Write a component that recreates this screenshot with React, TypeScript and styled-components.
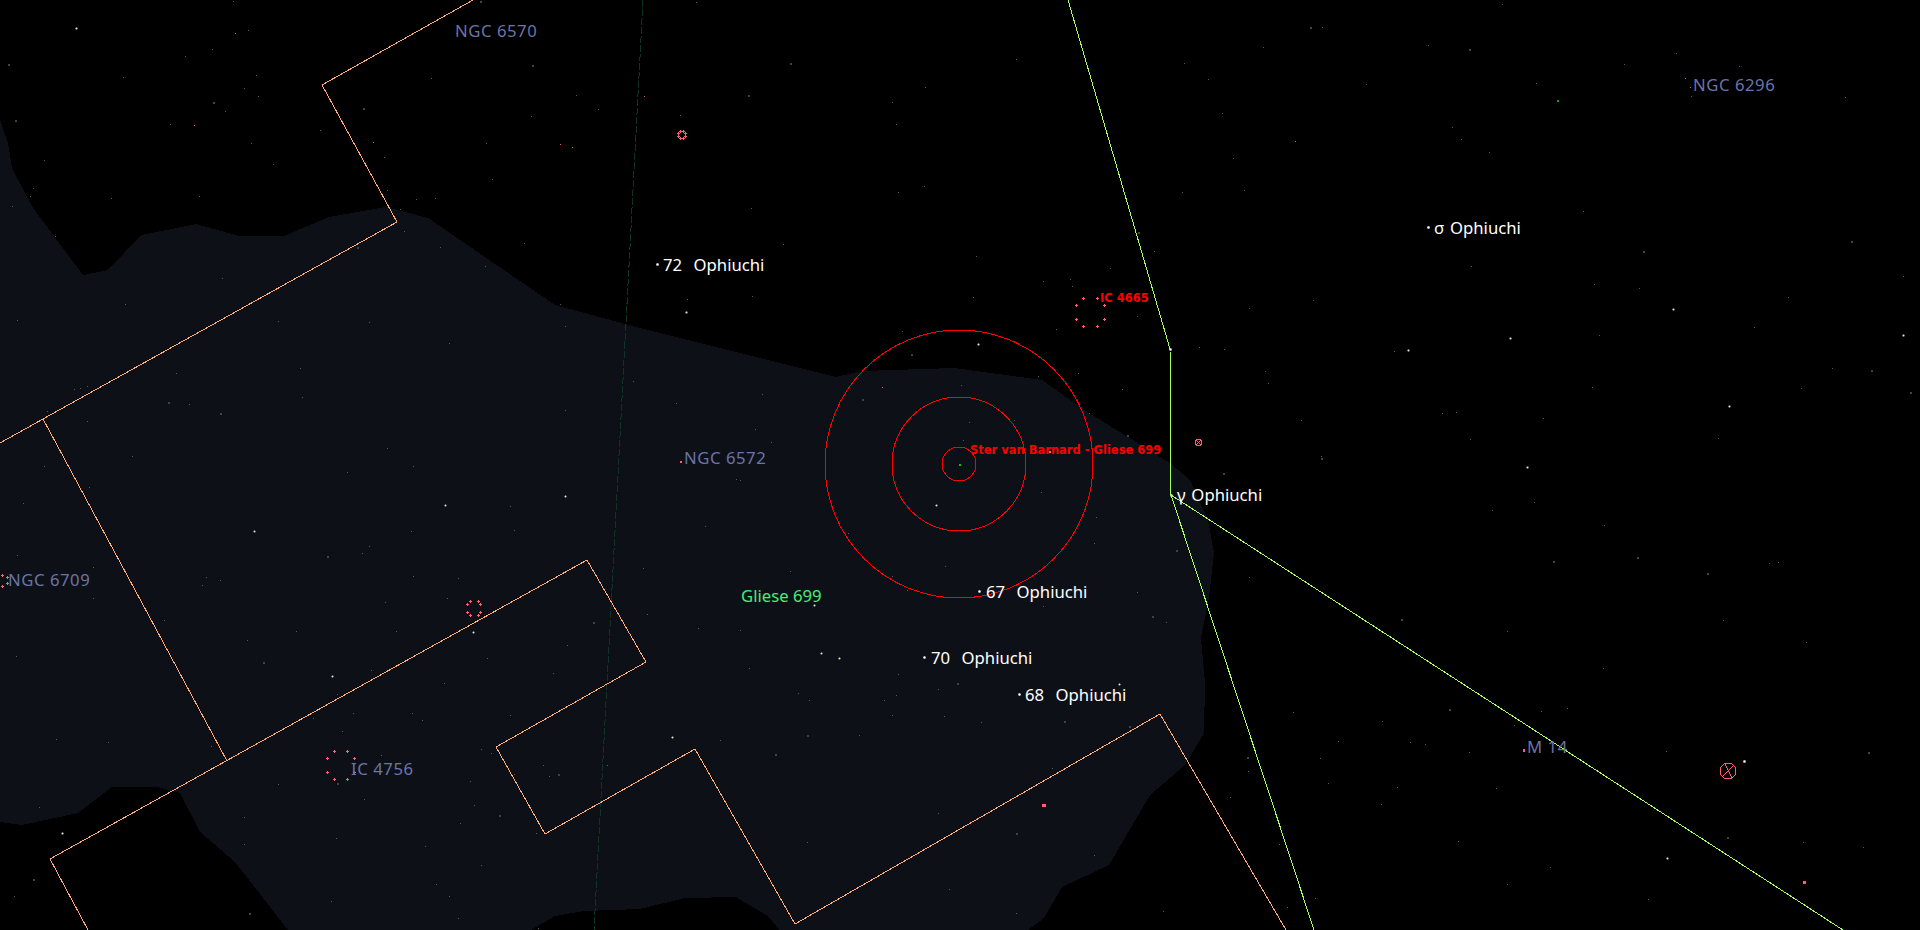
import React from "react";
import styled, { createGlobalStyle } from "styled-components";

const Global = createGlobalStyle`
  html, body { margin: 0; padding: 0; background: #000; height: 100%; overflow: hidden; }
  #root { height: 100%; }
`;

const Chart = styled.main`
  position: relative;
  width: 1920px;
  height: 930px;
  overflow: hidden;
  background: #000;
`;

const SkyMap = styled.svg`
  display: block;
  width: 1920px;
  height: 930px;
  shape-rendering: crispEdges;
`;

type Tone = "star" | "deep" | "target" | "selected";
const toneColor: Record<Tone, string> = {
  star: "#ffffff",
  deep: "#6b74a8",
  target: "#ff0000",
  selected: "#45ee77",
};
const toneRise: Record<Tone, number> = { star: 15, deep: 16, target: 11, selected: 15 };

const Label = styled.span<{ $x: number; $base: number; $tone: Tone }>`
  position: absolute;
  left: ${(p) => p.$x}px;
  top: ${(p) => p.$base - toneRise[p.$tone]}px;
  color: ${(p) => toneColor[p.$tone]};
  font-family: ${(p) =>
    p.$tone === "target" ? '"DejaVu Sans", sans-serif' : '"Noto Sans", sans-serif'};
  font-size: ${(p) => (p.$tone === "target" ? "11.5px" : "16.7px")};
  font-weight: ${(p) => (p.$tone === "target" ? 700 : 400)};
  letter-spacing: ${(p) => (p.$tone === "deep" ? "0.55px" : "0")};
  word-spacing: ${(p) => (p.$tone === "star" ? "1.4px" : "0")};
  line-height: ${(p) => (p.$tone === "target" ? "14px" : "20px")};
  white-space: pre;
`;

const labels: { text: string; x: number; base: number; tone: Tone }[] = [
  { text: "NGC 6570", x: 455, base: 37, tone: "deep" },
  { text: "NGC 6296", x: 1693, base: 91, tone: "deep" },
  { text: "σ Ophiuchi", x: 1434, base: 233, tone: "star" },
  { text: "72  Ophiuchi", x: 663, base: 270, tone: "star" },
  { text: "NGC 6572", x: 684, base: 464, tone: "deep" },
  { text: "γ Ophiuchi", x: 1177, base: 500, tone: "star" },
  { text: "67  Ophiuchi", x: 986, base: 597, tone: "star" },
  { text: "Gliese 699", x: 741, base: 601, tone: "selected" },
  { text: "NGC 6709", x: 8, base: 586, tone: "deep" },
  { text: "70  Ophiuchi", x: 931, base: 663, tone: "star" },
  { text: "68  Ophiuchi", x: 1025, base: 700, tone: "star" },
  { text: "M 14", x: 1527, base: 753, tone: "deep" },
  { text: "IC 4756", x: 351, base: 775, tone: "deep" },
  { text: "IC 4665", x: 1100, base: 302, tone: "target" },
  { text: "Ster van Barnard - Gliese 699", x: 970, base: 454, tone: "target" },
];

const milkyWay =
  "0,120 8,143 12,168 33,208 83,275 108,270 141,235 196,224 239,236 284,236 329,217 386,207 428,218 555,305 640,328 836,377 862,371 954,368 1042,380 1089,413 1170,463 1190,480 1208,520 1214,553 1209,598 1201,638 1205,682 1204,733 1185,765 1150,795 1109,865 1062,887 1044,918 1028,930 779,930 769,917 736,897 685,898 640,909 584,911 555,916 531,930 288,930 235,862 200,832 180,793 157,787 112,787 78,813 22,825 0,822";

const boundaries = [
  "473,0 322,85 397,222 43,419 0,443",
  "43,419 227,761",
  "88,930 50,859 587,560 646,662 496,747 545,834 695,749 795,924 1160,714 1286,930",
];
const ecliptic = ["1068,0 1170,349 1171,495 1843,930", "1171,495 1314,930"];

type P = number[];
type Z = { ox: number; oy: number; tiny: P[]; mid: P[]; bright: P[]; named?: P[]; red?: P[] };

const regions: Z[] = [
  {
    ox: 0, oy: 0,
    bright: [[187, 85]],
    mid: [[19,191],[36,359],[521,305],[889,323],[1303,194],[1175,2],[874,740],[411,1206],[539,1238]],
    tiny: [[570,2],[608,91],[520,148],[454,169],[302,232],[626,226],[599,265],[632,289],[552,334],[417,372],[783,391],[616,430],[941,472],[109,481],[670,492],[82,565],[73,589],[272,595],[487,589],[30,619],[135,709],[949,571],[1018,598],[1066,595],[1206,538],[1191,430],[1056,235],[1410,286],[1464,328],[1302,349],[1116,100],[981,626],[991,694],[1078,742],[1189,799],[1285,730],[1372,913],[1385,979],[1101,1030],[905,967],[680,964],[544,835],[307,912],[42,961],[430,1120],[734,1105],[741,1192],[462,1213],[1385,1231],[1552,1144],[947,1345],[324,1369],[214,1264],[182,1168],[197,1165],[212,1159],[116,1234]],
    red: [[576,100],[476,376],[914,427],[1373,433],[1402,442]],
  },
  {
    ox: 0, oy: 465,
    bright: [[623,199],[1091,121],[1385,94],[814,634],[1160,502],[152,1105]],
    mid: [[801,272],[1452,470],[644,590],[825,953],[1367,926],[1222,1050],[80,1241],[610,1343]],
    tiny: [[107,2],[849,22],[1013,3],[219,65],[57,115],[1250,124],[1260,196],[1008,199],[903,244],[887,265],[42,271],[228,307],[1013,334],[1121,340],[505,337],[540,346],[495,361],[228,400],[944,412],[1094,400],[403,466],[969,499],[724,499],[606,526],[1388,541],[38,574],[1194,580],[1354,625],[908,616],[1089,655],[825,688],[1250,751],[1010,745],[1035,766],[866,745],[768,760],[838,799],[136,823],[264,832],[516,844],[1179,853],[1204,865],[934,871],[1331,901],[1486,901],[1346,934],[1260,928],[1152,949],[680,958],[892,1003],[1162,1021],[96,1027],[599,1057],[1128,1075],[1312,1105],[822,1120],[597,1138],[1042,1144],[1179,1201],[1069,1258],[35,1294],[1099,1294],[811,1309],[1121,1360],[1319,1390]],
  },
  {
    ox: 640, oy: 0,
    named: [[42,791],[1299,1048]],
    bright: [[827,1033],[112,935]],
    mid: [[367,188],[264,284],[1220,695],[663,1061],[543,1198],[1193,1304]],
    tiny: [[136,5],[922,178],[1527,142],[1333,190],[1392,238],[699,262],[618,307],[98,346],[628,373],[1425,340],[1452,475],[697,559],[633,577],[1329,577],[1481,571],[272,625],[351,733],[1260,754],[824,769],[1152,805],[988,844],[1053,838],[275,889],[116,898],[816,892],[1058,859],[1493,925],[1217,949],[1020,988],[643,994],[1370,1042],[1431,1048],[1532,1114],[1538,1150],[1072,1120],[1181,1168],[299,1183],[976,1129],[1101,1240],[787,1156],[917,1259],[807,1267],[282,1288],[321,1327],[87,1210],[792,1321]],
    red: [[10,289],[593,1162]],
  },
  {
    ox: 640, oy: 465,
    named: [[830,378],[696,577],[929,688],[1301,90]],
    bright: [[725,120],[78,815],[427,421],[444,565],[488,580],[1174,658]],
    mid: [[1428,25],[1313,254],[1254,452],[776,653],[409,809],[330,866],[1038,767],[1198,782],[1487,875],[921,1103]],
    tiny: [[236,41],[246,45],[983,82],[1116,156],[1113,235],[159,184],[510,205],[8,310],[367,319],[748,304],[617,334],[653,376],[1493,337],[1218,382],[988,424],[16,448],[1288,472],[142,490],[246,496],[266,610],[631,628],[388,685],[415,706],[626,691],[597,706],[729,673],[618,751],[745,754],[836,772],[537,811],[196,826],[1010,910],[1490,919],[1445,997],[729,1045],[410,1132],[1113,1171],[1566,1138],[756,1273],[922,1345],[1282,1339]],
  },
  {
    ox: 1280, oy: 0,
    named: [[363,682]],
    bright: [[963,928],[1527,1006],[1100,1218],[314,1051],[564,1013]],
    mid: [[73,80],[462,146],[1398,722],[889,752],[1447,1110],[1543,1176],[100,1375]],
    tiny: [[103,80],[545,13],[363,136],[971,160],[843,193],[1125,199],[211,253],[628,250],[1008,289],[1385,292],[422,382],[444,418],[513,457],[743,634],[468,799],[770,853],[880,865],[1527,829],[1245,892],[82,901],[1162,982],[782,1006],[280,1054],[1353,1105],[765,1162],[1277,1165],[397,1240],[430,1237],[645,1255],[52,1261],[465,1318],[1072,1315],[100,1369]],
    red: [[36,424],[993,235],[1005,262]],
  },
  {
    ox: 1280, oy: 465,
    named: [[1137,889]],
    bright: [[606,7],[949,1180]],
    mid: [[668,287],[874,275],[1046,323],[296,462],[414,731],[1440,860],[1095,1115]],
    tiny: [[623,112],[520,136],[795,181],[1199,295],[1221,292],[1086,466],[555,499],[1289,532],[792,610],[704,730],[640,739],[32,742],[250,769],[574,781],[141,829],[319,832],[355,838],[97,880],[462,862],[946,859],[118,955],[287,967],[530,970],[248,1018],[1282,1132],[1429,1147],[436,1129],[661,1207],[555,1258],[86,1300],[18,1327],[902,1303]],
  },
];

const toPx = (r: Z, p: P) => [Math.round(r.ox + p[0] / 2.45), Math.round(r.oy + p[1] / 3)];

type XY = { x: number; y: number };
const Tiny = ({ x, y }: XY) => <rect x={x} y={y} width={1} height={1} fill="#565b57" />;
const Mid = ({ x, y }: XY) => <rect x={x} y={y} width={2} height={2} fill="#3c4643" />;
const Soft = ({ x, y }: XY) => (
  <g>
    <rect x={x - 1} y={y - 1} width={3} height={3} fill="#1c211e" />
    <rect x={x - 1} y={y} width={3} height={1} fill="#6d7469" />
    <rect x={x} y={y - 1} width={1} height={3} fill="#6d7469" />
    <rect x={x} y={y} width={1} height={1} fill="#dfe4d8" />
  </g>
);
const Named = ({ x, y }: XY) => (
  <g>
    <rect x={x - 1} y={y - 1} width={3} height={3} fill="#59605c" />
    <rect x={x - 1} y={y} width={3} height={1} fill="#b9c0ba" />
    <rect x={x} y={y - 1} width={1} height={3} fill="#b9c0ba" />
    <rect x={x} y={y} width={1} height={1} fill="#ffffff" />
  </g>
);

const Plus = ({ x, y }: XY) => (
  <path d={`M${x - 1} ${y}h3M${x} ${y - 1}v3`} stroke="#ff5f6e" strokeWidth={1} fill="none" />
);

const clusterRing = (xs: number[], ys: number[]) => [
  [xs[1], ys[0]], [xs[2], ys[0]], [xs[0], ys[1]], [xs[3], ys[1]],
  [xs[0], ys[2]], [xs[3], ys[2]], [xs[1], ys[3]], [xs[2], ys[3]],
];

const clusters = [
  ...clusterRing([1076, 1083, 1097, 1104], [298, 305, 319, 326]),
  ...clusterRing([327, 334, 347, 354], [751, 758, 772, 779]),
  ...clusterRing([467, 470, 478, 480], [601, 604, 612, 615]),
  ...clusterRing([678, 680, 683, 685], [131, 133, 136, 138]),
  [2, 575], [7, 577], [7, 583], [2, 586],
];

export default function App() {
  return (
    <Chart>
      <Global />
      <SkyMap viewBox="0 0 1920 930" xmlns="http://www.w3.org/2000/svg">
        <polygon points={milkyWay} fill="#0d1117" />
        <line x1={643} y1={0} x2={594} y2={930} stroke="#0f3324" strokeDasharray="7 2" />
        {regions.map((r, i) => (
          <g key={i}>
            {r.tiny.map((p, j) => { const [x, y] = toPx(r, p); return <Tiny key={j} x={x} y={y} />; })}
            {r.mid.map((p, j) => { const [x, y] = toPx(r, p); return <Mid key={j} x={x} y={y} />; })}
            {(r.red || []).map((p, j) => { const [x, y] = toPx(r, p); return <rect key={j} x={x} y={y} width={1} height={1} fill="#e0605a" />; })}
            {r.bright.map((p, j) => { const [x, y] = toPx(r, p); return <Soft key={j} x={x} y={y} />; })}
            {(r.named || []).map((p, j) => { const [x, y] = toPx(r, p); return <Named key={j} x={x} y={y} />; })}
          </g>
        ))}
        {boundaries.map((b) => <polyline key={b} points={b} fill="none" stroke="#ffab78" strokeWidth={1} />)}
        {ecliptic.map((b) => <polyline key={b} points={b} fill="none" stroke="#a8ff62" strokeWidth={1} />)}
        {clusters.map(([x, y], i) => <Plus key={i} x={x} y={y} />)}

        <rect x={680} y={461} width={2} height={2} fill="#ff5f6e" />
        <rect x={1523} y={749} width={2} height={3} fill="#ff5f6e" />
        <rect x={1803} y={881} width={3} height={3} fill="#ff5f6e" />
        <rect x={1042} y={804} width={4} height={3} fill="#ff5f6e" />
        <rect x={1049} y={451} width={2} height={2} fill="#ff5f6e" />
        <g fill="none" stroke="#ff5f6e" strokeWidth={1}>
          <circle cx={1198.5} cy={442.5} r={3.4} />
          <path d="M1196 440l5 5M1201 440l-5 5" />
          <circle cx={1728} cy={771} r={8} />
          <path d="M1725 764l7 14M1733 766l-10 10" />
        </g>
        <g fill="none" stroke="#ff0000" strokeWidth={1}>
          <circle cx={959} cy={464} r={17} />
          <circle cx={959} cy={464} r={67} />
          <circle cx={959} cy={464} r={134} />
        </g>
        <path d="M960 464l1 1-1 1-1-1z" fill="none" stroke="#10c020" />
        <path d="M1558 100l1 1-1 1-1-1z" fill="none" stroke="#10a020" />
      </SkyMap>
      {labels.map((l) => (
        <Label key={l.text} $x={l.x} $base={l.base} $tone={l.tone}>{l.text}</Label>
      ))}
    </Chart>
  );
}
